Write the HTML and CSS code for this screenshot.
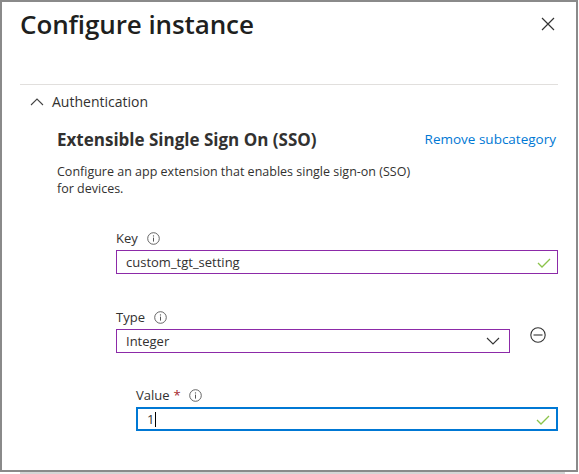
FILE: index.html
```html
<!DOCTYPE html>
<html>
<head>
<meta charset="utf-8">
<link rel="stylesheet" href="styles.css">
</head>
<body>
<div class="frame">
  <header class="header">
    <h1 class="title">Configure instance</h1>
    <button class="close" aria-label="Close">
      <svg width="14" height="14" viewBox="0 0 14 14"><path d="M1 1L13 13M13 1L1 13" stroke="#333" stroke-width="1.2" fill="none"/></svg>
    </button>
  </header>
  <div class="divider"></div>
  <div class="section-toggle">
    <svg class="chev" width="14" height="8" viewBox="0 0 14 8"><path d="M1 7L7 1L13 7" stroke="#444" stroke-width="1.1" fill="none"/></svg>
    <span>Authentication</span>
  </div>
  <div class="sub">
    <div class="sub-head">
      <h2 class="sub-title">Extensible Single Sign On (SSO)</h2>
      <a class="remove" href="#">Remove subcategory</a>
    </div>
    <p class="desc">Configure an app extension that enables single sign-on (SSO)<br>for devices.</p>

    <div class="field key-field">
      <label class="label">Key <span class="info"><svg width="13" height="13" viewBox="0 0 13 13"><circle cx="6.5" cy="6.5" r="5.8" stroke="#555" fill="none" stroke-width="0.9"/><path d="M6.5 5.6V9.6" stroke="#555" stroke-width="1"/><circle cx="6.5" cy="3.9" r="0.65" fill="#555"/></svg></span></label>
      <div class="input purple"><span>custom_tgt_setting</span><svg class="check" width="14" height="10" viewBox="0 0 14 10"><path d="M1 5L5 9L13 1" stroke="#8bc34a" stroke-width="1.3" fill="none"/></svg></div>
    </div>

    <div class="field type-field">
      <label class="label">Type <span class="info"><svg width="13" height="13" viewBox="0 0 13 13"><circle cx="6.5" cy="6.5" r="5.8" stroke="#555" fill="none" stroke-width="0.9"/><path d="M6.5 5.6V9.6" stroke="#555" stroke-width="1"/><circle cx="6.5" cy="3.9" r="0.65" fill="#555"/></svg></span></label>
      <div class="type-row">
        <div class="input purple select"><span>Integer</span><svg class="chev-down" width="14" height="8" viewBox="0 0 14 8"><path d="M1 1L7 7L13 1" stroke="#333" stroke-width="1.1" fill="none"/></svg></div>
        <svg class="minus" width="16" height="16" viewBox="0 0 16 16"><circle cx="8" cy="8" r="7.2" stroke="#333" stroke-width="1.1" fill="none"/><path d="M3.5 8H12.5" stroke="#333" stroke-width="1.1"/></svg>
      </div>
    </div>

    <div class="field value-field">
      <label class="label">Value <span class="req">*</span> <span class="info"><svg width="13" height="13" viewBox="0 0 13 13"><circle cx="6.5" cy="6.5" r="5.8" stroke="#555" fill="none" stroke-width="0.9"/><path d="M6.5 5.6V9.6" stroke="#555" stroke-width="1"/><circle cx="6.5" cy="3.9" r="0.65" fill="#555"/></svg></span></label>
      <div class="input blue"><span>1<span class="caret"></span></span><svg class="check" width="14" height="10" viewBox="0 0 14 10"><path d="M1 5L5 9L13 1" stroke="#8bc34a" stroke-width="1.3" fill="none"/></svg></div>
    </div>
  </div>
</div>
<div class="shadow-line"></div>
</body>
</html>
```
FILE: styles.css
```css
html, body { margin: 0; padding: 0; background: #fff; }
body { font-family: "Open Sans", "Noto Sans", sans-serif; color: #323130; width: 579px; height: 474px; overflow: hidden; }
.frame {
  box-sizing: border-box;
  width: 578px;
  height: 472px;
  border: 2px solid #8a8a8a;
  padding: 0 18px 0 18px;
}
.header { display: flex; justify-content: space-between; align-items: flex-start; padding-top: 5px; }
.title { margin: 0; font-size: 26px; font-weight: 600; line-height: 34px; color: #201f1e; letter-spacing: -0.1px; }
.close { border: 0; background: none; padding: 0; margin: 10px 3px 0 0; width: 14px; height: 14px; display: flex; }
.divider { height: 1px; background: #e1dfdd; margin-top: 43px; }
.section-toggle { display: flex; align-items: center; gap: 8px; padding-left: 10px; margin-top: 7px; font-size: 14px; line-height: 20px; color: #323130; }
.chev { margin-top: -1px; }
.sub { padding-left: 37px; }
.sub-head { display: flex; justify-content: space-between; align-items: center; margin-top: 16px; }
.sub-title { margin: 0; font-size: 17px; font-weight: 700; line-height: 24px; color: #323130; }
.remove { color: #0078d4; text-decoration: none; font-size: 13.5px; line-height: 20px; margin-top: -2px; margin-right: 2px; }
.desc { margin: 11px 0 0; font-size: 12.5px; line-height: 17px; color: #323130; }
.field { padding-left: 59px; }
.label { display: flex; align-items: center; font-size: 13px; line-height: 18px; color: #323130; gap: 0; }
.info { display: inline-flex; margin-left: 9px; }
.req { color: #a4262c; margin-left: 4px; }
.value-field .info { margin-left: 8px; }
.input {
  box-sizing: border-box;
  height: 24px;
  display: flex;
  align-items: center;
  justify-content: space-between;
  padding: 0 6px 0 9px;
  font-size: 13px;
  margin-top: 3px;
}
.purple { border: 1px solid #8c2aa8; }
.blue { border: 2px solid #0078d4; padding-left: 9px; }
.key-field { margin-top: 32px; }
.type-field { margin-top: 34px; }
.type-row { display: flex; align-items: flex-start; }
.select { width: 394px; padding-right: 9px; }
.minus { margin-left: 20px; margin-top: 1px; }
.value-field { margin-top: 33px; padding-left: 79px; }
.caret { display: inline-block; width: 1px; height: 15px; background: #000; vertical-align: -3px; margin-left: 1px; }
.check { margin-top: 1px; }
.shadow-line { height: 2px; margin-left: 20px; width: 545px; background: #d6d6d6; }
```
